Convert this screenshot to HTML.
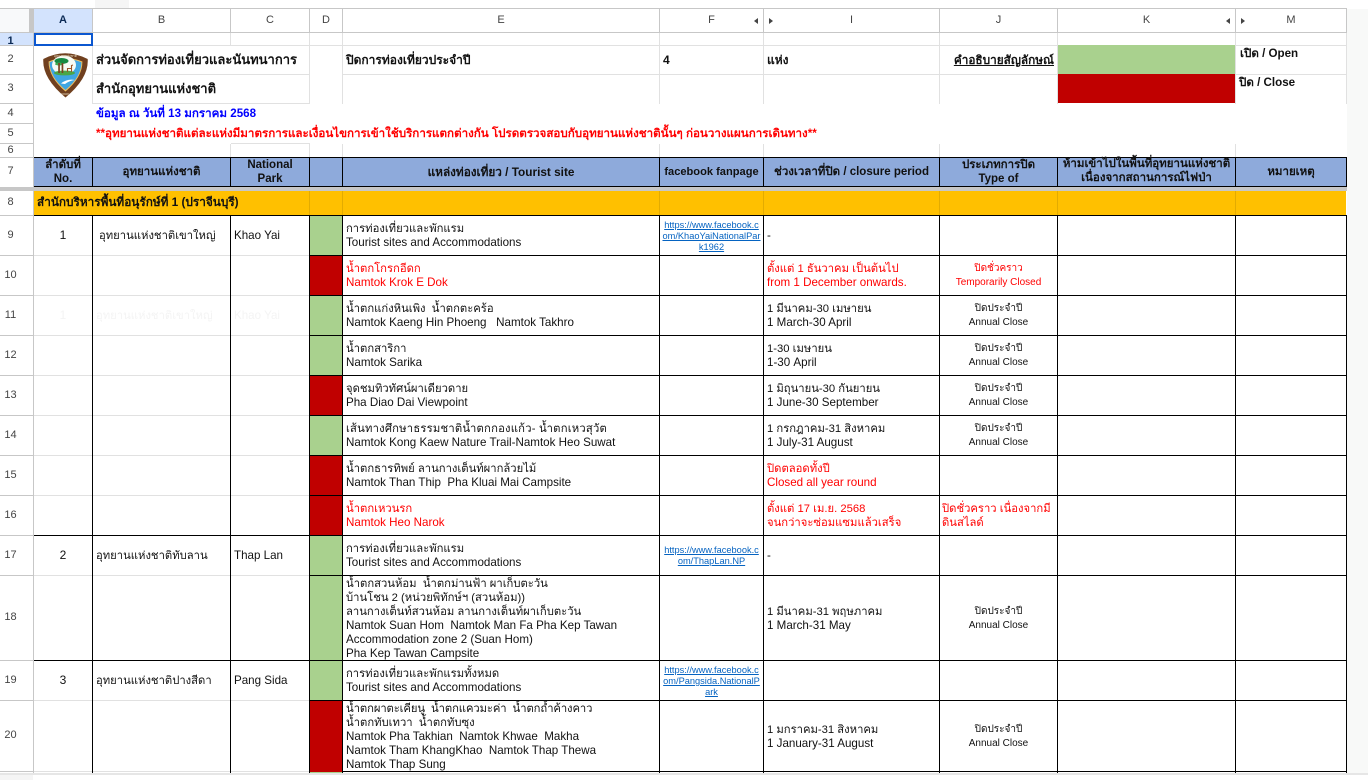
<!DOCTYPE html>
<html><head><meta charset="utf-8">
<style>
html,body{margin:0;padding:0;width:1368px;height:780px;overflow:hidden;background:#fff}
body{position:relative;font-family:"Liberation Sans","Noto Sans CJK SC",sans-serif;font-size:12px;color:#111}
div{position:absolute;box-sizing:border-box}
.t{white-space:pre;line-height:14px;font-size:11.6px;margin-top:1px}
.th{font-size:11.25px}
.r{color:#f00}.b{font-weight:bold}.c{text-align:center}
.n{margin-top:0}
.h{height:1px}.v{width:1px}
.k{background:#000}.g{background:#e1e1e1}.m{background:#c7c7c7}
.gr{background:#a9d18e;left:310px;width:33px}.rd{background:#c00000;left:310px;width:33px}
.rn{left:0;width:21px;text-align:center;font-size:11px;line-height:14px;color:#444}
.cl{top:13px;text-align:center;font-size:11px;line-height:14px;color:#444}
.hd{font-weight:bold;font-size:11.5px;line-height:14px;text-align:center;white-space:pre}
.l{font-size:9.25px;line-height:11px;color:#0563c1;text-decoration:underline;text-align:center;left:660px;width:103px;white-space:pre}
.a{left:940px;width:117px;text-align:center;font-size:10px;line-height:14px;white-space:pre;margin-top:1px}
.tl{width:0;height:0;border-top:3px solid transparent;border-bottom:3px solid transparent;border-right:4px solid #444;top:18px}
.tr{width:0;height:0;border-top:3px solid transparent;border-bottom:3px solid transparent;border-left:4px solid #444;top:18px}
</style></head><body>

<!-- chrome -->
<div style="left:95px;top:0;width:34px;height:8px;background:#f5f5f5"></div>
<div style="left:1347px;top:9px;width:21px;height:764px;background:#f8f9f8"></div>
<div style="left:0;top:774px;width:33px;height:6px;background:#f5f5f5"></div>
<div style="left:0;top:9px;width:30px;height:23px;background:#f8f9fa"></div>
<div style="left:34px;top:9px;width:58px;height:23px;background:#d3e3fd"></div>
<div style="left:0;top:33px;width:33px;height:12px;background:#d3e3fd"></div>

<!-- fills -->
<div style="left:34px;top:158px;width:1312px;height:28px;background:#8eaadb"></div>
<div style="left:34px;top:191px;width:1312px;height:24px;background:#ffc000"></div>
<div style="left:0;top:187px;width:1347px;height:4px;background:#c7c7c7"></div>
<div style="left:1057px;top:45px;width:179px;height:29px;background:#a9d18e"></div>
<div style="left:1057px;top:74px;width:179px;height:29px;background:#c00000"></div>

<div class="gr" style="top:216px;height:40px"></div>
<div class="rd" style="top:256px;height:40px"></div>
<div class="gr" style="top:296px;height:80px"></div>
<div class="rd" style="top:376px;height:40px"></div>
<div class="gr" style="top:416px;height:40px"></div>
<div class="rd" style="top:456px;height:80px"></div>
<div class="gr" style="top:536px;height:165px"></div>
<div class="rd" style="top:701px;height:71px"></div>
<div class="gr" style="top:772px;height:2px"></div>

<!-- column / row header lines -->
<div class="h m" style="left:0;top:8px;width:1347px"></div>
<div class="h m" style="left:0;top:32px;width:1347px"></div>
<div style="left:29px;top:9px;width:4px;height:24px;background:#c7c7c7"></div>
<div class="v m" style="left:33px;top:9px;height:765px"></div>
<div class="v m" style="left:92px;top:9px;height:23px"></div>
<div class="v m" style="left:230px;top:9px;height:23px"></div>
<div class="v m" style="left:309px;top:9px;height:23px"></div>
<div class="v m" style="left:342px;top:9px;height:23px"></div>
<div class="v m" style="left:659px;top:9px;height:23px"></div>
<div class="v m" style="left:763px;top:9px;height:23px"></div>
<div class="v m" style="left:939px;top:9px;height:23px"></div>
<div class="v m" style="left:1057px;top:9px;height:23px"></div>
<div class="v m" style="left:1235px;top:9px;height:23px"></div>
<div class="v m" style="left:1346px;top:9px;height:23px"></div>
<div class="h m" style="left:0;top:45px;width:33px"></div>
<div class="h m" style="left:0;top:74px;width:33px"></div>
<div class="h m" style="left:0;top:103px;width:33px"></div>
<div class="h m" style="left:0;top:123px;width:33px"></div>
<div class="h m" style="left:0;top:143px;width:33px"></div>
<div class="h m" style="left:0;top:157px;width:33px"></div>
<div class="h m" style="left:0;top:215px;width:33px"></div>
<div class="h m" style="left:0;top:255px;width:33px"></div>
<div class="h m" style="left:0;top:295px;width:33px"></div>
<div class="h m" style="left:0;top:335px;width:33px"></div>
<div class="h m" style="left:0;top:375px;width:33px"></div>
<div class="h m" style="left:0;top:415px;width:33px"></div>
<div class="h m" style="left:0;top:455px;width:33px"></div>
<div class="h m" style="left:0;top:495px;width:33px"></div>
<div class="h m" style="left:0;top:535px;width:33px"></div>
<div class="h m" style="left:0;top:575px;width:33px"></div>
<div class="h m" style="left:0;top:660px;width:33px"></div>
<div class="h m" style="left:0;top:700px;width:33px"></div>
<div class="h m" style="left:0;top:771px;width:33px"></div>

<!-- light grid top area -->
<div class="h g" style="left:34px;top:45px;width:1023px"></div>
<div class="h g" style="left:1236px;top:45px;width:110px"></div>
<div class="h g" style="left:93px;top:74px;width:216px"></div>
<div class="h g" style="left:343px;top:74px;width:714px"></div>
<div class="h g" style="left:1236px;top:74px;width:110px"></div>
<div class="h g" style="left:93px;top:103px;width:216px"></div>
<div class="h g" style="left:231px;top:143px;width:79px"></div>
<div class="v g" style="left:92px;top:33px;height:71px"></div>
<div class="v g" style="left:230px;top:33px;height:12px"></div>
<div class="v g" style="left:309px;top:33px;height:71px"></div>
<div class="v g" style="left:342px;top:33px;height:71px"></div>
<div class="v g" style="left:659px;top:33px;height:71px"></div>
<div class="v g" style="left:763px;top:33px;height:71px"></div>
<div class="v g" style="left:939px;top:33px;height:71px"></div>
<div class="v g" style="left:1057px;top:33px;height:71px"></div>
<div class="v g" style="left:1235px;top:33px;height:71px"></div>
<div class="v g" style="left:1346px;top:33px;height:71px"></div>
<div class="v g" style="left:230px;top:144px;height:13px"></div>
<div class="v g" style="left:309px;top:144px;height:13px"></div>
<div class="v g" style="left:342px;top:144px;height:13px"></div>
<div class="v g" style="left:659px;top:144px;height:13px"></div>
<div class="v g" style="left:763px;top:144px;height:13px"></div>
<div class="v g" style="left:939px;top:144px;height:13px"></div>
<div class="v g" style="left:1235px;top:144px;height:13px"></div>

<!-- row 8 faint dividers -->
<div class="v" style="left:309px;top:191px;height:24px;background:#e3ab00"></div>
<div class="v" style="left:342px;top:191px;height:24px;background:#e3ab00"></div>
<div class="v" style="left:659px;top:191px;height:24px;background:#e3ab00"></div>
<div class="v" style="left:763px;top:191px;height:24px;background:#e3ab00"></div>
<div class="v" style="left:939px;top:191px;height:24px;background:#e3ab00"></div>
<div class="v" style="left:1057px;top:191px;height:24px;background:#e3ab00"></div>
<div class="v" style="left:1235px;top:191px;height:24px;background:#e3ab00"></div>

<!-- table horizontal lines -->
<div class="h k" style="left:34px;top:157px;width:1313px"></div>
<div class="h k" style="left:34px;top:186px;width:1313px"></div>
<div class="h k" style="left:34px;top:215px;width:1313px"></div>
<div class="h g" style="left:34px;top:255px;width:276px"></div><div class="h k" style="left:310px;top:255px;width:1037px"></div>
<div class="h g" style="left:34px;top:295px;width:276px"></div><div class="h k" style="left:310px;top:295px;width:1037px"></div>
<div class="h g" style="left:34px;top:335px;width:276px"></div><div class="h k" style="left:310px;top:335px;width:1037px"></div>
<div class="h g" style="left:34px;top:375px;width:276px"></div><div class="h k" style="left:310px;top:375px;width:1037px"></div>
<div class="h g" style="left:34px;top:415px;width:276px"></div><div class="h k" style="left:310px;top:415px;width:1037px"></div>
<div class="h g" style="left:34px;top:455px;width:276px"></div><div class="h k" style="left:310px;top:455px;width:1037px"></div>
<div class="h g" style="left:34px;top:495px;width:276px"></div><div class="h k" style="left:310px;top:495px;width:1037px"></div>
<div class="h k" style="left:34px;top:535px;width:1313px"></div>
<div class="h g" style="left:34px;top:575px;width:276px"></div><div class="h k" style="left:310px;top:575px;width:1037px"></div>
<div class="h k" style="left:34px;top:660px;width:1313px"></div>
<div class="h g" style="left:34px;top:700px;width:276px"></div><div class="h k" style="left:310px;top:700px;width:1037px"></div>
<div class="h g" style="left:34px;top:771px;width:276px"></div><div class="h k" style="left:343px;top:771px;width:1004px"></div>

<!-- table verticals -->
<div class="v k" style="left:92px;top:157px;height:30px"></div><div class="v k" style="left:92px;top:215px;height:559px"></div>
<div class="v k" style="left:230px;top:157px;height:30px"></div><div class="v k" style="left:230px;top:215px;height:559px"></div>
<div class="v k" style="left:309px;top:157px;height:30px"></div><div class="v k" style="left:309px;top:215px;height:559px"></div>
<div class="v k" style="left:342px;top:157px;height:30px"></div><div class="v k" style="left:342px;top:215px;height:559px"></div>
<div class="v k" style="left:659px;top:157px;height:30px"></div><div class="v k" style="left:659px;top:215px;height:559px"></div>
<div class="v k" style="left:763px;top:157px;height:30px"></div><div class="v k" style="left:763px;top:215px;height:559px"></div>
<div class="v k" style="left:939px;top:157px;height:30px"></div><div class="v k" style="left:939px;top:215px;height:559px"></div>
<div class="v k" style="left:1057px;top:157px;height:30px"></div><div class="v k" style="left:1057px;top:215px;height:559px"></div>
<div class="v k" style="left:1235px;top:157px;height:30px"></div><div class="v k" style="left:1235px;top:215px;height:559px"></div>
<div class="v k" style="left:1346px;top:157px;height:30px"></div><div class="v k" style="left:1346px;top:215px;height:559px"></div>
<div style="left:0;top:773px;width:1368px;height:2px;background:#e6e6e6"></div>

<!-- selection -->
<div style="left:34px;top:33px;width:59px;height:13px;border:2px solid #0b57d0"></div>

<!-- column letters -->
<div class="cl b" style="left:34px;width:58px;color:#0b2a55">A</div>
<div class="cl" style="left:93px;width:137px">B</div>
<div class="cl" style="left:231px;width:78px">C</div>
<div class="cl" style="left:310px;width:32px">D</div>
<div class="cl" style="left:343px;width:316px">E</div>
<div class="cl" style="left:660px;width:103px">F</div>
<div class="cl" style="left:764px;width:175px">I</div>
<div class="cl" style="left:940px;width:117px">J</div>
<div class="cl" style="left:1058px;width:177px">K</div>
<div class="cl" style="left:1236px;width:110px">M</div>
<div class="tl" style="left:754px"></div><div class="tr" style="left:769px"></div>
<div class="tl" style="left:1226px"></div><div class="tr" style="left:1241px"></div>

<!-- row numbers -->
<div class="rn b" style="top:34px;color:#0b2a55">1</div>
<div class="rn" style="top:52px">2</div>
<div class="rn" style="top:81px">3</div>
<div class="rn" style="top:106px">4</div>
<div class="rn" style="top:126px">5</div>
<div class="rn" style="top:143px">6</div>
<div class="rn" style="top:164px">7</div>
<div class="rn" style="top:195px">8</div>
<div class="rn" style="top:228px">9</div>
<div class="rn" style="top:268px">10</div>
<div class="rn" style="top:308px">11</div>
<div class="rn" style="top:348px">12</div>
<div class="rn" style="top:388px">13</div>
<div class="rn" style="top:428px">14</div>
<div class="rn" style="top:468px">15</div>
<div class="rn" style="top:508px">16</div>
<div class="rn" style="top:548px">17</div>
<div class="rn" style="top:610px">18</div>
<div class="rn" style="top:673px">19</div>
<div class="rn" style="top:728px">20</div>

<!-- logo -->
<svg style="position:absolute;left:43px;top:51px" width="45" height="47" viewBox="0 0 45 47">
<path d="M0.3 8 Q22 -3.5 44.7 8 Q46 27 22.5 46.5 Q-1 27 0.3 8Z" fill="#70401f"/>
<path d="M5.6 10.5 Q22 3.5 39.4 10.5 Q39.6 26 22.5 40.5 Q5.4 26 5.6 10.5Z" fill="#f0c060"/>
<path d="M6.6 11.2 Q22 4.6 38.4 11.2 Q38.4 25.6 22.5 39 Q6.6 25.6 6.6 11.2Z" fill="#3fa6e2"/>
<ellipse cx="21" cy="14" rx="12" ry="9.5" fill="#f6fbf4"/>
<ellipse cx="21.5" cy="22" rx="10.5" ry="2.4" fill="#4aa648"/>
<ellipse cx="18.5" cy="10" rx="7" ry="3" fill="#178a42"/>
<ellipse cx="16" cy="13" rx="4" ry="1.5" fill="#3fae54"/>
<rect x="15.2" y="12" width="1.7" height="10" fill="#7a4421"/>
<rect x="18.6" y="12" width="1.7" height="10" fill="#7a4421"/>
<path d="M24.5 21 V17.5 H28.5 V21 M28.5 17.5 V14.5 L30 14" stroke="#9a5426" stroke-width="1.1" fill="none"/>
<path d="M18 32.5 Q24 27.5 32 29 Q26 29.8 22 33Z" fill="#fff"/>
<text x="22.5" y="6.2" text-anchor="middle" font-size="3.4" fill="#e9dcc0" font-family="'Liberation Sans',sans-serif">อุทยานแห่งชาติ</text>
<text x="22.5" y="44" text-anchor="middle" font-size="3" fill="#e9dcc0" font-family="'Liberation Sans',sans-serif">PARK</text>
</svg>

<!-- top texts -->
<div class="t b n" style="left:96px;top:53px;font-size:13px">ส่วนจัดการท่องเที่ยวและนันทนาการ</div>
<div class="t b n" style="left:96px;top:82px;font-size:13px">สำนักอุทยานแห่งชาติ</div>
<div class="t b" style="left:96px;top:106px;color:#00f">ข้อมูล ณ วันที่ 13 มกราคม 2568</div>
<div class="t b r" style="left:96px;top:126px">**อุทยานแห่งชาติแต่ละแห่งมีมาตรการและเงื่อนไขการเข้าใช้บริการแตกต่างกัน โปรดตรวจสอบกับอุทยานแห่งชาตินั้นๆ ก่อนวางแผนการเดินทาง**</div>
<div class="t b n" style="left:346px;top:53px;font-size:12px">ปิดการท่องเที่ยวประจำปี</div>
<div class="t b n" style="left:663px;top:53px;font-size:12px">4</div>
<div class="t b n" style="left:767px;top:53px;font-size:12px">แห่ง</div>
<div class="t b n" style="left:940px;top:53px;width:114px;text-align:right;text-decoration:underline;font-size:11.8px">คำอธิบายสัญลักษณ์</div>
<div class="t b" style="left:1240px;top:46px">เปิด / Open</div>
<div class="t b" style="left:1239px;top:75px">ปิด / Close</div>

<!-- header row -->
<div class="hd" style="left:34px;width:58px;top:158px">ลำดับที่
No.</div>
<div class="hd" style="left:93px;width:137px;top:165px">อุทยานแห่งชาติ</div>
<div class="hd" style="left:231px;width:78px;top:158px">National
Park</div>
<div class="hd" style="left:343px;width:316px;top:165px;font-size:11.8px">แหล่งท่องเที่ยว / Tourist site</div>
<div class="hd" style="left:660px;width:103px;top:165px;font-size:11.1px">facebook fanpage</div>
<div class="hd" style="left:764px;width:175px;top:165px">ช่วงเวลาที่ปิด / closure period</div>
<div class="hd" style="left:940px;width:117px;top:158px">ประเภทการปิด
Type of</div>
<div class="hd" style="left:1058px;width:177px;top:157px">ห้ามเข้าไปในพื้นที่อุทยานแห่งชาติ
เนื่องจากสถานการณ์ไฟป่า</div>
<div class="hd" style="left:1236px;width:110px;top:165px">หมายเหตุ</div>

<div class="t b n" style="left:37px;top:195px;font-size:11.8px">สำนักบริหารพื้นที่อนุรักษ์ที่ 1 (ปราจีนบุรี)</div>

<!-- A B C -->
<div class="t c n" style="left:34px;width:58px;top:228px;font-size:12px">1</div>
<div class="t th" style="left:99px;top:228px">อุทยานแห่งชาติเขาใหญ่</div>
<div class="t" style="left:234px;top:228px">Khao Yai</div>
<div class="t c n" style="left:34px;width:58px;top:308px;color:#f4f4f4;font-size:12px">1</div>
<div class="t th" style="left:96px;top:308px;color:#f4f4f4">อุทยานแห่งชาติเขาใหญ่</div>
<div class="t" style="left:234px;top:308px;color:#f4f4f4">Khao Yai</div>
<div class="t c n" style="left:34px;width:58px;top:548px;font-size:12px">2</div>
<div class="t th" style="left:96px;top:548px">อุทยานแห่งชาติทับลาน</div>
<div class="t" style="left:234px;top:548px">Thap Lan</div>
<div class="t c n" style="left:34px;width:58px;top:673px;font-size:12px">3</div>
<div class="t th" style="left:96px;top:673px">อุทยานแห่งชาติปางสีดา</div>
<div class="t" style="left:234px;top:673px">Pang Sida</div>

<!-- E -->
<div class="t" style="left:346px;top:221px"><span class="th">การท่องเที่ยวและพักแรม</span>
Tourist sites and Accommodations</div>
<div class="t r" style="left:346px;top:261px"><span class="th">น้ำตกโกรกอีดก</span>
Namtok Krok E Dok</div>
<div class="t" style="left:346px;top:301px"><span class="th">น้ำตกแก่งหินเพิง  น้ำตกตะคร้อ</span>
Namtok Kaeng Hin Phoeng   Namtok Takhro</div>
<div class="t" style="left:346px;top:341px"><span class="th">น้ำตกสาริกา</span>
Namtok Sarika</div>
<div class="t" style="left:346px;top:381px"><span class="th">จุดชมทิวทัศน์ผาเดียวดาย</span>
Pha Diao Dai Viewpoint</div>
<div class="t" style="left:346px;top:421px"><span class="th" style="letter-spacing:.2px">เส้นทางศึกษาธรรมชาติน้ำตกกองแก้ว- น้ำตกเหวสุวัต</span>
Namtok Kong Kaew Nature Trail-Namtok Heo Suwat</div>
<div class="t" style="left:346px;top:461px"><span class="th">น้ำตกธารทิพย์ ลานกางเต็นท์ผากล้วยไม้</span>
Namtok Than Thip  Pha Kluai Mai Campsite</div>
<div class="t r" style="left:346px;top:501px"><span class="th">น้ำตกเหวนรก</span>
Namtok Heo Narok</div>
<div class="t" style="left:346px;top:541px"><span class="th">การท่องเที่ยวและพักแรม</span>
Tourist sites and Accommodations</div>
<div class="t" style="left:346px;top:576px"><span class="th">น้ำตกสวนห้อม  น้ำตกม่านฟ้า ผาเก็บตะวัน</span>
<span class="th">บ้านโชน 2 (หน่วยพิทักษ์ฯ (สวนห้อม))</span>
<span class="th">ลานกางเต็นท์สวนห้อม ลานกางเต็นท์ผาเก็บตะวัน</span>
Namtok Suan Hom  Namtok Man Fa Pha Kep Tawan
Accommodation zone 2 (Suan Hom)
Pha Kep Tawan Campsite</div>
<div class="t" style="left:346px;top:666px"><span class="th">การท่องเที่ยวและพักแรมทั้งหมด</span>
Tourist sites and Accommodations</div>
<div class="t" style="left:346px;top:701px"><span class="th" style="letter-spacing:-.1px">น้ำตกผาตะเคียนู  น้ำตกแควมะค่า  น้ำตกถ้ำค้างคาว</span>
<span class="th">น้ำตกทับเทวา  น้ำตกทับซุง</span>
Namtok Pha Takhian  Namtok Khwae  Makha
Namtok Tham KhangKhao  Namtok Thap Thewa
Namtok Thap Sung</div>

<!-- F -->
<div class="l" style="top:220px">https://www.facebook.c
om/KhaoYaiNationalPar
k1962</div>
<div class="l" style="top:545px">https://www.facebook.c
om/ThapLan.NP</div>
<div class="l" style="top:665px">https://www.facebook.c
om/Pangsida.NationalP
ark</div>

<!-- I -->
<div class="t" style="left:767px;top:228px">-</div>
<div class="t r" style="left:767px;top:261px"><span class="th">ตั้งแต่ 1 ธันวาคม เป็นต้นไป</span>
from 1 December onwards.</div>
<div class="t" style="left:767px;top:301px"><span class="th">1 มีนาคม-30 เมษายน</span>
1 March-30 April</div>
<div class="t" style="left:767px;top:341px"><span class="th">1-30 เมษายน</span>
1-30 April</div>
<div class="t" style="left:767px;top:381px"><span class="th">1 มิถุนายน-30 กันยายน</span>
1 June-30 September</div>
<div class="t" style="left:767px;top:421px"><span class="th">1 กรกฎาคม-31 สิงหาคม</span>
1 July-31 August</div>
<div class="t r" style="left:767px;top:461px"><span class="th">ปิดตลอดทั้งปี</span>
Closed all year round</div>
<div class="t r" style="left:767px;top:501px"><span class="th">ตั้งแต่ 17 เม.ย. 2568</span>
<span class="th">จนกว่าจะซ่อมแซมแล้วเสร็จ</span></div>
<div class="t" style="left:767px;top:548px">-</div>
<div class="t" style="left:767px;top:604px"><span class="th">1 มีนาคม-31 พฤษภาคม</span>
1 March-31 May</div>
<div class="t" style="left:767px;top:722px"><span class="th">1 มกราคม-31 สิงหาคม</span>
1 January-31 August</div>

<!-- J -->
<div class="a r" style="top:261px">ปิดชั่วคราว
Temporarily Closed</div>
<div class="a" style="top:301px">ปิดประจำปี
Annual Close</div>
<div class="a" style="top:341px">ปิดประจำปี
Annual Close</div>
<div class="a" style="top:381px">ปิดประจำปี
Annual Close</div>
<div class="a" style="top:421px">ปิดประจำปี
Annual Close</div>
<div class="t r th" style="left:942px;top:501px">ปิดชั่วคราว เนื่องจากมี
ดินสไลด์</div>
<div class="a" style="top:604px">ปิดประจำปี
Annual Close</div>
<div class="a" style="top:722px">ปิดประจำปี
Annual Close</div>

</body></html>
